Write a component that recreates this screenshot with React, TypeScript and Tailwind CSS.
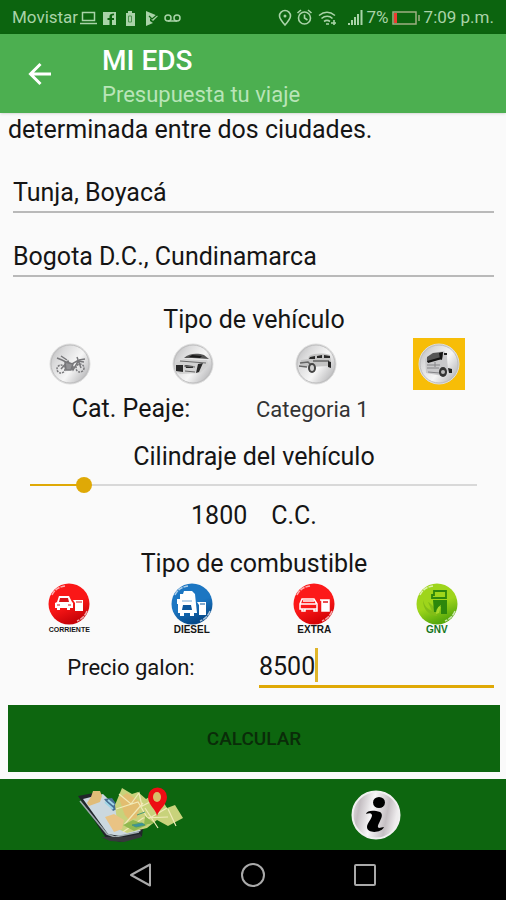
import { useState } from "react";
import type { ReactNode } from "react";

const vehicles = ["Motocicleta", "Automóvil", "Campero", "Camión"];
const fuels = ["CORRIENTE", "DIESEL", "EXTRA", "GNV"];

function StatusBar() {
  return (
    <div className="flex h-[34px] items-center justify-between bg-[#0c640f] px-3 pt-0.5 text-[17px] text-[#a9d3a8]">
      <div className="flex items-center gap-0.5">
        <span>Movistar</span>
        <svg width="104" height="18" viewBox="0 0 104 18" fill="none" stroke="currentColor" strokeWidth="1.5" aria-hidden="true">
          <path d="M2.500 3.500h12v8h-12zM0 14.500h17" />
          <path d="M23 3h13v13h-4v-5h2V9h-2V7.500c0-1 .5-1.200 2-1.200V4.500c-3 0-4.500.8-4.500 3V9h-2v2h2v5H23z" fill="currentColor" stroke="none" />
          <path d="M46 4h2V2h4v2h3v13h-9z" fill="currentColor" stroke="none" />
          <path d="M48.500 7h3v6h-3z" stroke="#4c944e" strokeWidth="1" />
          <path d="M66 2l12 5-5 5-3-3v3l3 2-7 3z" fill="currentColor" stroke="none" />
          <path d="M69 7l3 3 6-5" stroke="#0c640f" strokeWidth="1.200" />
          <circle cx="88" cy="9" r="3" />
          <circle cx="97" cy="9" r="3" />
          <path d="M88 12h9" />
        </svg>
      </div>
      <div className="flex items-center gap-[3px]">
        <svg width="86" height="20" viewBox="0 0 86 20" fill="none" stroke="currentColor" strokeWidth="1.600" aria-hidden="true">
          <path d="M7 17C3 12.500 1.500 10.500 1.500 8a5.500 5.500 0 0 1 11 0c0 2.500-1.500 4.500-5.500 9z" />
          <circle cx="7" cy="8" r="1.500" fill="currentColor" stroke="none" />
          <circle cx="26.500" cy="10" r="6" />
          <path d="M26.500 6.500V10l3 2M19.500 5l3.500-3M33.500 5L30 2" />
          <path d="M41 7.500c5-4 11-4 16 0M43.500 10.500c3.500-3 8-3 11 0M46 13.500c2-1.500 4-1.500 6 0" />
          <path d="M48 16h3M53 15h5M56 12v5" />
          <path d="M71 17v-2M74 17v-5M77 17V9M80 17V6M83.500 17V2" strokeWidth="2" />
        </svg>
        <span>7%</span>
        <svg width="29" height="16" viewBox="0 0 29 16" fill="none" aria-hidden="true">
          <path d="M1 2h23v12H1zM27 5v6" stroke="#9fae83" strokeWidth="1.500" />
          <path d="M2 3h3v10H2z" fill="#ee3b30" />
        </svg>
        <span>7:09 p.m.</span>
      </div>
    </div>
  );
}

function VehicleDrawing({ index }: { index: number }) {
  const art: ReactNode[] = [
    <g key="moto" fill="none" stroke="#77777a" strokeWidth="1.500">
      <circle cx="12" cy="26" r="4" strokeDasharray="2 1" />
      <circle cx="31" cy="25" r="4" strokeDasharray="2 1" />
      <path d="M8 15l5 2 4 2 6 2 5-3 7 1M12 26l7-8 5 9 6-10M16 24h9M12 13l6 4M28 14l4 11M30 17l6-1" />
      <path d="M16 19l8 2-2 6h-5z" fill="#929295" />
    </g>,
    <g key="car">
      <path d="M12 15c5-5 14-5 20-3l5 4-17-1z" fill="#555" />
      <path d="M20 12l10 1-2 2-11-1z" fill="#181818" />
      <path d="M3 20l9-4 23 1 2 5-9 8-20 1-5-3z" fill="#d2d2d2" />
      <path d="M4 22h7v7l-7-1zM26 21l5-1-4 9-3 1zM13 22l8 1v2h-7M14 28l8 1" fill="#282828" />
      <path d="M12 23l11 1M13 28l10 1M8 18l26 2" stroke="#686868" />
    </g>,
    <g key="jeep">
      <path d="M14 13c6-3 14-3 21-1l1 6-3 5-18 1-10-2 1-5 7-1z" fill="#c4c4c4" />
      <path d="M15 14l5-1v3h-6zM22 13l5-1v3h-5zM29 12l6 1v2h-6z" fill="#292929" />
      <path d="M5 20l8-1 4 4M18 18h16M4 23l8 1" stroke="#666" strokeWidth="1.500" fill="none" />
      <ellipse cx="17" cy="25" rx="4" ry="5" fill="#444" />
      <ellipse cx="17" cy="25" rx="2" ry="3" fill="#d2d2d2" />
      <path d="M33 18l3 1v6l-3-1z" fill="#252525" />
    </g>,
    <g key="truck">
      <path d="M7 16l7-6 12-2 3 5 1 15-5 5-17-3z" fill="#c9c9cb" />
      <path d="M9 14l6-4 10-1-1 7-15 3z" fill="#555" />
      <path d="M9 18l14-4 1 2-14 4zM21 10l4-1-1 8-2-1z" fill="#151515" />
      <path d="M9 22h13M9 25h12M10 29l12 1M17 19v5" stroke="#858588" />
      <path d="M26 10h3v2h-3zM30 25l4 1v4h-3z" fill="#222" />
      <ellipse cx="25" cy="29" rx="4" ry="5" fill="#343434" />
      <circle cx="25" cy="29" r="2" fill="#bbb" />
    </g>,
  ];
  return (
    <svg width="42" height="42" viewBox="0 0 42 42" aria-hidden="true">
      <defs>
        <linearGradient id={`steel${index}`} x1="0" y1="0" x2="1" y2=".7">
          <stop stopColor="#b2b2b4" />
          <stop offset=".3" stopColor="#dadadb" />
          <stop offset=".65" stopColor="#f6f6f6" />
          <stop offset="1" stopColor="#bababc" />
        </linearGradient>
      </defs>
      <circle cx="21" cy="21" r="20" fill={`url(#steel${index})`} stroke="#dedede" />
      <circle cx="21" cy="21" r="19" fill="none" stroke="#bdbdbe" />
      {art[index]}
    </svg>
  );
}

function FuelDrawing({ index }: { index: number }) {
  const light = ["#fa1717", "#1c76c2", "#fc1919", "#9ed51b"][index];
  const dark = ["#c90308", "#074b8b", "#d60307", "#57a90b"][index];
  const art: ReactNode[] = [
    <g key="regular" fill="#fff">
      <path d="M9 19l2-6h10l3 6 1 1v5h-3v2h-3v-2h-7v2H9v-2H7v-5z" />
      <path d="M12 15h8l1 4H11z" fill="#d71418" />
      <path d="M9 22h3M20 22h3" stroke="#d71418" />
      <path d="M27 17h8v11h-8v-8l-2-3h2z" />
      <path d="M28 19h6" stroke="#d71418" />
    </g>,
    <g key="diesel" fill="#fff">
      <path d="M9 11h3l1-3h8l3 3 1 10 1 9h-3v3h-4v-3h-6v3H9v-3H7v-9H6v-5h3z" />
      <path d="M12 22h8l1 5H11z" fill="#0b569c" />
      <path d="M11 18h10" stroke="#75a9d6" />
      <path d="M28 19h7v13h-7V22l-2-3h2z" />
      <path d="M29 21h5" stroke="#0b569c" />
    </g>,
    <g key="extra" fill="none" stroke="#fff" strokeWidth="1.500">
      <path d="M9 16h12l3 5v5H7v-5zM7 21h16M9 26v2h3v-2M21 26v2h3v-2M10 18h11" />
      <path d="M29 17h7v11h-7zM27 17h3" fill="#fff" />
      <path d="M30 19h5" stroke="#e01519" />
    </g>,
    <g key="gas">
      <path d="M7 17c0 9 5 15 14 16-1-8-5-12-9-14l4 9c-5-2-8-6-9-11z" fill="#82bd18" />
      <path d="M18 8h12v7H16v-3h2z" fill="none" stroke="#2c870c" strokeWidth="1.800" />
      <path d="M17 17h14v14h-6v-7h-3v5h-4z" fill="#2c870c" />
      <path d="M20 31c0-5 2-7 5-9l-2 8z" fill="#a8d82b" />
    </g>,
  ];
  return (
    <svg width="42" height="42" viewBox="0 0 42 42" aria-hidden="true">
      <defs>
        <linearGradient id={`fuel${index}`} x1="0" y1="0" x2=".4" y2="1">
          <stop stopColor={light} />
          <stop offset=".6" stopColor={light} />
          <stop offset="1" stopColor={dark} />
        </linearGradient>
      </defs>
      <circle cx="21" cy="21" r="20.500" fill={`url(#fuel${index})`} />
      <path d="M4 12C7 6 11 4 17 3M39 28c-2 5-5 8-10 10" fill="none" stroke="#fff" strokeOpacity=".65" strokeWidth="1.500" strokeDasharray="5 1" />
      {art[index]}
    </svg>
  );
}

function MapDrawing() {
  return (
    <svg width="108" height="56" viewBox="0 0 108 56" aria-hidden="true">
      <path d="M1 9l21-4 44 37-1 7-22 6-14-4z" fill="#20252a" />
      <path d="M6 12l20-5 38 37-21 5-12-2z" fill="#cbd8df" />
      <path d="M3 14l27 33 8 3 24-5" fill="none" stroke="#9eaaae" strokeWidth="1.500" />
      <path d="M24 50h24l15-3 2 3-18 5-14-1z" fill="#36393c" />
      <path d="M10 16l4-6 2-6h7l2 5-2 6-11 4z" fill="#e0bc78" />
      <path d="M27 12l8-1 7 10-6 3z" fill="#466e94" />
      <path d="M28 15l8 7M31 13l6 5" stroke="#9fd5e6" strokeWidth="2" />
      <path d="M38 18l7-17 10 6 6-2 8 7 11-7 10 16 8-3 8 13-15 8-11-6-10 8-20 5-9-4z" fill="#c8d27b" />
      <path d="M42 11l8-5 15 10-6 16-12-6zM47 27l8-7 6 8-8 6z" fill="#e2bd70" />
      <path d="M42 7l12 10 8-11 3 13 12-6M39 22l22-7 10 17 19-11M47 38l19-22M68 21l13 20M91 22l8 17M46 45l20-14 25-1" fill="none" stroke="#f0eab8" strokeWidth="1.200" />
      <path d="M28 30l9-3 10 6-2 9-8 3z" fill="#e9c384" />
      <path d="M46 38l10-5 14 5-13 6zM68 29l9 7-10 2z" fill="#90b850" />
      <path d="M55 38l10-2 3 2-9 2zM60 28l8-3" fill="#3a91a5" stroke="#4a9876" />
      <path d="M80 29c-1-7-9-11-9-19a9.500 9.500 0 0 1 19 0c0 8-8 12-10 19z" fill="#ed0d14" />
      <ellipse cx="80" cy="10" rx="4" ry="5" fill="#d8bf69" />
    </svg>
  );
}

function InfoDrawing() {
  return (
    <svg width="50" height="50" viewBox="0 0 50 50" aria-hidden="true">
      <defs>
        <linearGradient id="infoSteel" x1="0" y1="0" x2="1" y2=".2">
          <stop stopColor="#e9e6e8" />
          <stop offset=".2" stopColor="#c4bec2" />
          <stop offset=".48" stopColor="#f8f7f8" />
          <stop offset=".8" stopColor="#c5bfc3" />
          <stop offset="1" stopColor="#eeeced" />
        </linearGradient>
      </defs>
      <circle cx="25" cy="25" r="23.500" fill="url(#infoSteel)" stroke="#f1f1f1" strokeWidth="2" />
      <ellipse cx="28" cy="12.500" rx="6" ry="5.500" />
      <path d="M15 24c1-4 8-4 14-2 3 2 2 5 0 9-2 4-3 6-1 7l5-1c-2 6-17 7-17 0 0-4 5-8 5-12-2-3-4-1-6-1z" />
    </svg>
  );
}

export default function App() {
  const [origin, setOrigin] = useState("Tunja, Boyacá");
  const [destination, setDestination] = useState("Bogota D.C., Cundinamarca");
  const [vehicle, setVehicle] = useState(3);
  const [fuel, setFuel] = useState(-1);
  const [displacement, setDisplacement] = useState(1800);
  const [price, setPrice] = useState("8500");
  const field = "block h-10 w-full border-b-2 border-[#b9b9b9] bg-transparent outline-none";

  return (
    <div className="flex min-h-screen flex-col bg-[#fafafa] font-[Roboto,sans-serif] text-[#151515]">
      <StatusBar />
      <header className="z-10 flex h-[79px] items-center bg-[#4caf50] shadow-sm">
        <button type="button" aria-label="Volver" className="flex w-[102px] items-center pl-7 text-white">
          <svg width="24" height="24" viewBox="0 0 24 24" fill="none" stroke="currentColor" strokeWidth="3" aria-hidden="true">
            <path d="M23 12H3M12.500 2L2.500 12l10 10" />
          </svg>
        </button>
        <div className="pt-1.5">
          <h1 className="text-[28px] leading-9 font-medium text-white">MI EDS</h1>
          <p className="text-[22px] leading-8 text-[#b9e5b8]">Presupuesta tu viaje</p>
        </div>
      </header>

      <main className="flex-1 pt-px pr-1.5 pl-2 text-[25px] leading-8">
        <p>determinada entre dos ciudades.</p>
        <div className="mt-[27px] flex flex-col gap-6 pr-1.5 pl-[5px]">
          <input aria-label="Ciudad de origen" className={field} value={origin} onChange={(e) => setOrigin(e.target.value)} />
          <input aria-label="Ciudad de destino" className={field} value={destination} onChange={(e) => setDestination(e.target.value)} />
        </div>

        <fieldset className="mt-[27px]">
          <legend className="mx-auto">Tipo de vehículo</legend>
          <div className="mt-0.5 grid grid-cols-4 justify-items-center">
            {vehicles.map((name, i) => (
              <label key={name} className={vehicle === i ? "relative flex size-[52px] items-center justify-center bg-[#f7bd07]" : "relative flex size-[52px] items-center justify-center"}>
                <input type="radio" name="vehicle" aria-label={name} className="sr-only" checked={vehicle === i} onChange={() => setVehicle(i)} />
                <VehicleDrawing index={i} />
              </label>
            ))}
          </div>
        </fieldset>

        <div className="mt-[3px] grid grid-cols-2 items-baseline">
          <span className="text-center">Cat. Peaje:</span>
          <span className="pl-0.5 text-[22px] text-[#333]">Categoria 1</span>
        </div>

        <label htmlFor="displacement" className="mt-[15px] block text-center">Cilindraje del vehículo</label>
        <div className="mr-[15px] ml-[14px] grid h-6 items-center">
          <div className="mx-2 h-[2px] bg-[#d8d8d8] [grid-area:1/1]">
            <div className="h-full bg-[#dfa906]" style={{ width: `${displacement / 150}%` }} />
          </div>
          <input
            id="displacement"
            type="range"
            min="0"
            max="15000"
            step="100"
            value={displacement}
            onChange={(e) => setDisplacement(Number(e.target.value))}
            className="z-0 h-6 w-full appearance-none bg-transparent [grid-area:1/1] [&::-webkit-slider-thumb]:size-4 [&::-webkit-slider-thumb]:appearance-none [&::-webkit-slider-thumb]:rounded-full [&::-webkit-slider-thumb]:bg-[#dfa906]"
          />
        </div>
        <div className="mt-[3px] flex justify-center gap-6">
          <output htmlFor="displacement">{displacement}</output>
          <span>C.C.</span>
        </div>

        <fieldset className="mt-4">
          <legend className="mx-auto">Tipo de combustible</legend>
          <div className="mt-[3px] mr-0.5 grid grid-cols-4 justify-items-center">
            {fuels.map((name, i) => (
              <label key={name} className="relative flex flex-col items-center">
                <input type="radio" name="fuel" className="sr-only" checked={fuel === i} onChange={() => setFuel(i)} />
                <FuelDrawing index={i} />
                <span
                  className={
                    i === 0
                      ? "font-['Liberation_Sans',sans-serif] text-[7px] leading-[10px] font-bold"
                      : i === 3
                        ? "font-['Liberation_Sans',sans-serif] text-[10px] leading-[10px] font-bold text-[#16751b]"
                        : "font-['Liberation_Sans',sans-serif] text-[10px] leading-[10px] font-bold"
                  }
                >
                  {name}
                </span>
              </label>
            ))}
          </div>
        </fieldset>

        <div className="mt-[13px] grid grid-cols-2 items-center">
          <label htmlFor="price" className="text-center text-[22px]">Precio galon:</label>
          <div className="relative mr-1.5 ml-[5px]">
            <input id="price" inputMode="numeric" className="block h-10 w-full border-b-3 border-[#dfa906] bg-transparent outline-none" value={price} onChange={(e) => setPrice(e.target.value)} />
            <span className="absolute top-0 left-14 h-[34px] w-[3px] bg-[#dfb52a]" aria-hidden="true" />
          </div>
        </div>

        <button type="button" className="mt-[17px] mb-[7px] block h-[67px] w-full bg-[#0d660f] text-[19px] font-medium text-[#0a2c09]">CALCULAR</button>
      </main>

      <nav aria-label="Secciones" className="grid h-[71px] grid-cols-2 bg-[#0d660f] px-2">
        <button type="button" aria-label="Mapa" className="flex items-center justify-center"><MapDrawing /></button>
        <button type="button" aria-label="Información" className="flex items-center justify-center"><InfoDrawing /></button>
      </nav>
      <nav aria-label="Sistema" className="flex h-[50px] items-center justify-center gap-[88px] bg-black text-[#aaa]">
        <button type="button" aria-label="Atrás">
          <svg width="24" height="24" viewBox="0 0 24 24" fill="none" stroke="currentColor" strokeWidth="2" aria-hidden="true"><path d="M21 1.500v21L2 12z" strokeLinejoin="round" /></svg>
        </button>
        <button type="button" aria-label="Inicio">
          <svg width="24" height="24" viewBox="0 0 24 24" fill="none" stroke="currentColor" strokeWidth="2" aria-hidden="true"><circle cx="12" cy="12" r="11" /></svg>
        </button>
        <button type="button" aria-label="Recientes">
          <svg width="24" height="24" viewBox="0 0 24 24" fill="none" stroke="currentColor" strokeWidth="2" aria-hidden="true"><rect x="2" y="2" width="20" height="20" rx="1" /></svg>
        </button>
      </nav>
    </div>
  );
}
